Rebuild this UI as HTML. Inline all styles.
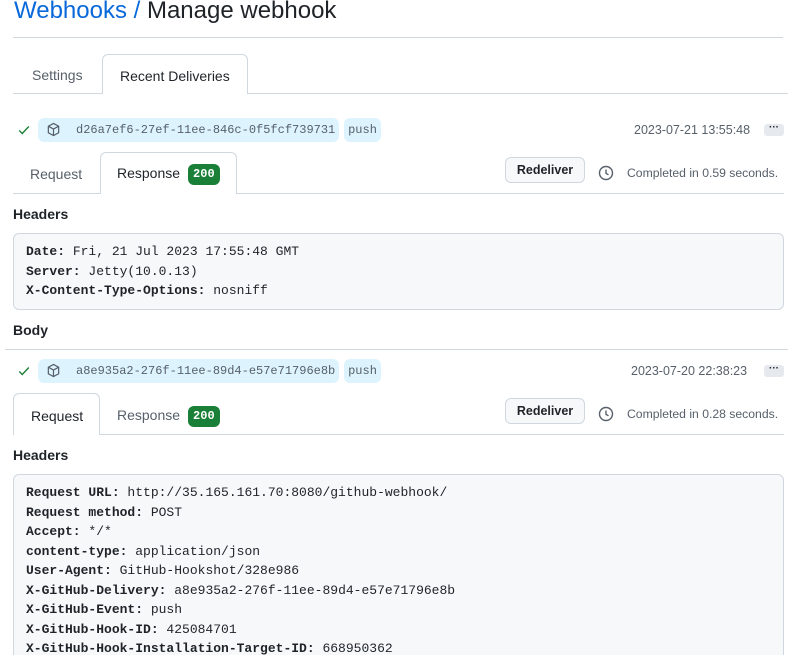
<!DOCTYPE html>
<html><head><style>
*{margin:0;padding:0;box-sizing:border-box}
html,body{width:788px;height:655px;overflow:hidden}
body{background:#fff;font-family:"Liberation Sans",sans-serif;color:#1f2328;position:relative}
.a{position:absolute}
.mono{font-family:"Liberation Mono",monospace}
.line{position:absolute;height:1px;background:#d0d7de}
.tab{position:absolute;border:1px solid #d0d7de;border-bottom:none;border-radius:6px 6px 0 0;background:#fff;font-size:14px}
.t{position:absolute;font-size:14px}
.pill{position:absolute;background:#ddf4ff;border-radius:6px;height:24px;font-size:12px;color:#57606a;line-height:24px}
.badge{display:inline-block;background:#1a7f37;color:#fff;border-radius:6px;font-family:"Liberation Mono",monospace;font-weight:bold;font-size:12px;padding:0 5px;line-height:20px;height:21px;vertical-align:middle;margin-left:8px}
.btn{position:absolute;border:1px solid #d0d7de;border-radius:6px;background:#f6f8fa;font-size:12.5px;font-weight:bold;text-align:center;line-height:24px}
.h{position:absolute;font-size:14px;font-weight:bold}
.code{position:absolute;left:13px;width:771px;background:#f6f8fa;border:1px solid #d0d7de;border-radius:6px;font-family:"Liberation Mono",monospace;font-size:13px;line-height:19.5px;padding:8px 12px;white-space:pre}
.code b{font-weight:bold}
.gray{color:#57606a;font-size:12.5px}
.gray2{color:#57606a;font-size:12.2px}
.dots{position:absolute;width:20px;height:12px;background:#e6eaef;border-radius:3px;font-size:10px;font-weight:bold;text-align:center;line-height:8px;color:#1f2328}
</style></head><body>
<div class="a" style="left:14px;top:-6px;font-size:24px;line-height:34px"><span style="color:#0969da">Webhooks /</span> Manage webhook</div>
<div class="line" style="left:13px;top:37px;width:770px"></div>
<div class="line" style="left:13px;top:93px;width:775px"></div>
<div class="t" style="left:32px;top:67px;color:#57606a">Settings</div>
<div class="tab" style="left:102px;top:54px;width:146px;height:40px;padding:13px 0 0 17px">Recent Deliveries</div>

<svg class="a" style="left:17px;top:123px" width="14" height="14" viewBox="0 0 16 16"><path d="M2.5 8.5l3.5 3.5 7.5-8" stroke="#1a7f37" stroke-width="1.6" fill="none"/></svg>
<div class="pill mono" style="left:38px;top:118px;width:301px"><svg class="a" style="left:8px;top:4px" width="15" height="15" viewBox="0 0 16 16"><path d="M8 1.5l5.5 3v7L8 14.5l-5.5-3v-7zM2.5 4.5L8 7.5l5.5-3M8 7.5v7" stroke="#57606a" stroke-width="1.3" fill="none"/></svg><span style="position:absolute;left:38px">d26a7ef6-27ef-11ee-846c-0f5fcf739731</span></div>
<div class="pill mono" style="left:344px;top:118px;width:37px;text-align:center">push</div>
<div class="a gray" style="left:634px;top:123px">2023-07-21 13:55:48</div>
<div class="dots" style="left:764px;top:124px">···</div>

<div class="line" style="left:13px;top:193px;width:771px"></div>
<div class="t" style="left:30px;top:166px;color:#57606a">Request</div>
<div class="tab" style="left:100px;top:152px;width:137px;height:42px;padding:11px 0 0 16px">Response<span class="badge">200</span></div>
<div class="btn" style="left:505px;top:157px;width:80px;height:26px">Redeliver</div>
<svg class="a" style="left:598px;top:165px" width="16" height="16" viewBox="0 0 16 16"><circle cx="8" cy="8" r="6.5" stroke="#57606a" stroke-width="1.4" fill="none"/><path d="M8 4.5V8.3l2.5 1.5" stroke="#57606a" stroke-width="1.4" fill="none"/></svg>
<div class="a gray2" style="left:627px;top:166px">Completed in 0.59 seconds.</div>

<div class="h" style="left:13px;top:206px">Headers</div>
<div class="code" style="top:233px;height:77px"><b>Date:</b> Fri, 21 Jul 2023 17:55:48 GMT
<b>Server:</b> Jetty(10.0.13)
<b>X-Content-Type-Options:</b> nosniff</div>
<div class="h" style="left:13px;top:322px">Body</div>
<div class="line" style="left:5px;top:349px;width:783px"></div>

<svg class="a" style="left:17px;top:364px" width="14" height="14" viewBox="0 0 16 16"><path d="M2.5 8.5l3.5 3.5 7.5-8" stroke="#1a7f37" stroke-width="1.6" fill="none"/></svg>
<div class="pill mono" style="left:38px;top:359px;width:301px"><svg class="a" style="left:8px;top:4px" width="15" height="15" viewBox="0 0 16 16"><path d="M8 1.5l5.5 3v7L8 14.5l-5.5-3v-7zM2.5 4.5L8 7.5l5.5-3M8 7.5v7" stroke="#57606a" stroke-width="1.3" fill="none"/></svg><span style="position:absolute;left:38px">a8e935a2-276f-11ee-89d4-e57e71796e8b</span></div>
<div class="pill mono" style="left:344px;top:359px;width:37px;text-align:center">push</div>
<div class="a gray" style="left:631px;top:364px">2023-07-20 22:38:23</div>
<div class="dots" style="left:764px;top:365px">···</div>

<div class="line" style="left:13px;top:434px;width:771px"></div>
<div class="tab" style="left:13px;top:393px;width:87px;height:42px;padding:14px 0 0 17px">Request</div>
<div class="t" style="left:117px;top:406px;color:#57606a">Response<span class="badge" style="color:#fff">200</span></div>
<div class="btn" style="left:505px;top:398px;width:80px;height:26px">Redeliver</div>
<svg class="a" style="left:598px;top:406px" width="16" height="16" viewBox="0 0 16 16"><circle cx="8" cy="8" r="6.5" stroke="#57606a" stroke-width="1.4" fill="none"/><path d="M8 4.5V8.3l2.5 1.5" stroke="#57606a" stroke-width="1.4" fill="none"/></svg>
<div class="a gray2" style="left:627px;top:407px">Completed in 0.28 seconds.</div>

<div class="h" style="left:13px;top:447px">Headers</div>
<div class="code" style="top:474px;height:200px"><b>Request URL:</b> http://35.165.161.70:8080/github-webhook/
<b>Request method:</b> POST
<b>Accept:</b> */*
<b>content-type:</b> application/json
<b>User-Agent:</b> GitHub-Hookshot/328e986
<b>X-GitHub-Delivery:</b> a8e935a2-276f-11ee-89d4-e57e71796e8b
<b>X-GitHub-Event:</b> push
<b>X-GitHub-Hook-ID:</b> 425084701
<b>X-GitHub-Hook-Installation-Target-ID:</b> 668950362</div>
</body></html>
